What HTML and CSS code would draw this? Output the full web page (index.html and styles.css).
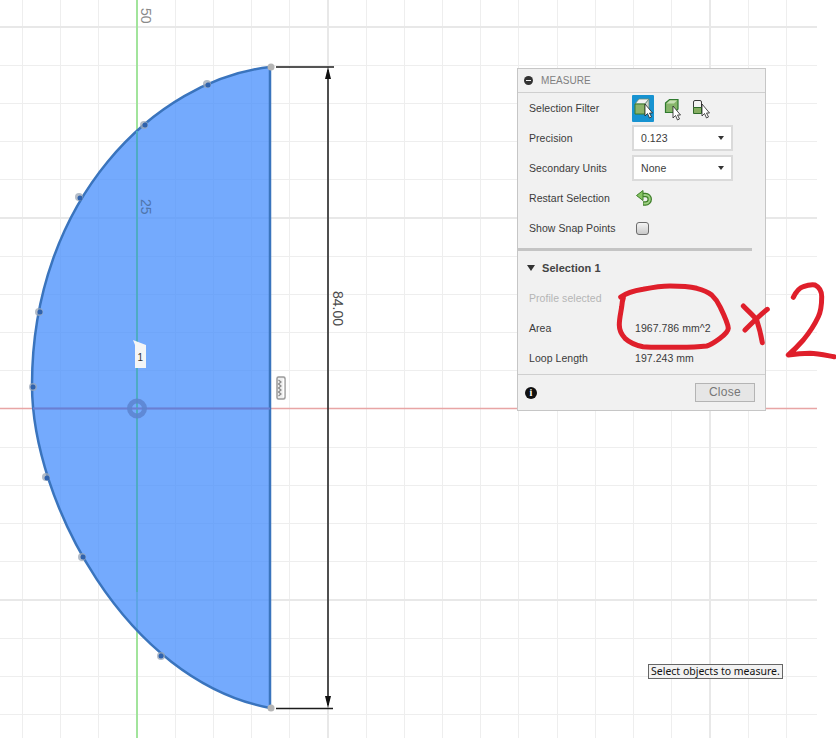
FILE: index.html
```html
<!DOCTYPE html>
<html lang="en">
<head>
<meta charset="utf-8">
<title>Measure</title>
<link rel="stylesheet" href="styles.css">
</head>
<body>
<main class="viewport">
  <svg class="canvas" width="836" height="738" viewBox="0 0 836 738">
    <path class="grid" d="M22.5 0V738M60.5 0V738M98.5 0V738M175.5 0V738M213.5 0V738M251.5 0V738M289.5 0V738M366.5 0V738M404.5 0V738M442.5 0V738M480.5 0V738M518.5 0V738M557.5 0V738M595.5 0V738M633.5 0V738M671.5 0V738M748.5 0V738M786.5 0V738M0 65.5H817M0 103.5H817M0 141.5H817M0 179.5H817M0 256.5H817M0 294.5H817M0 332.5H817M0 370.5H817M0 447.5H817M0 485.5H817M0 523.5H817M0 561.5H817M0 638.5H817M0 676.5H817M0 714.5H817"/>
    <path class="grid-major" d="M328 0V738M710 0V738M0 27H817M0 218H817M0 600H817"/>
    <path class="axis-x" d="M0 408.5H817"/>
    <path class="axis-y" d="M137 0V738"/>
    <path class="profile" d="M270 67C155 80 32 200 32 385C32 500 125 680 270 708Z"/>
    <path class="axis-y-in" d="M137 131V592"/>
    <path class="axis-x-in" d="M33 408.5H270"/>
    <circle class="origin" cx="137" cy="408.5" r="7.5"/>
    <g class="pts-halo">
      <circle cx="207" cy="84" r="4"/><circle cx="144" cy="125" r="4"/><circle cx="79" cy="197" r="4"/><circle cx="39" cy="312" r="4"/><circle cx="33" cy="387" r="4"/><circle cx="46" cy="477" r="4"/><circle cx="82" cy="557" r="4"/><circle cx="161" cy="656" r="4"/>
    </g>
    <g class="pts">
      <circle cx="208" cy="85" r="2.5"/><circle cx="145" cy="125" r="2.5"/><circle cx="80" cy="198" r="2.5"/><circle cx="40" cy="312" r="2.5"/><circle cx="33" cy="387" r="2.5"/><circle cx="47" cy="478" r="2.5"/><circle cx="83" cy="557" r="2.5"/><circle cx="161" cy="656" r="2.5"/>
    </g>
    <circle class="end" cx="271" cy="67" r="3.5"/>
    <circle class="end" cx="271" cy="708" r="3.5"/>
    <path class="tag" d="M133 340L146 345V368H135V345Z"/>
    <text class="tag-text" x="137.5" y="361">1</text>
    <g class="snap">
      <rect x="277" y="377" width="8" height="22" rx="1.5"/>
      <path class="snap-bar" d="M283.5 379V397"/>
      <path class="snap-teeth" d="M278.5 380L281 382L278.5 384L281 386L278.5 388L281 390L278.5 392L281 394L278.5 396"/>
    </g>
    <path class="dim" d="M276 67H334M276 708.5H333M328 70V705"/>
    <path class="arrow" d="M328 67L331 79H325ZM328 708L331 696H325Z"/>
    <text class="dim-text" transform="translate(333 291) rotate(90)">84.00</text>
    <text class="scale" transform="translate(141 8) rotate(90)">50</text>
    <text class="scale scale-in" transform="translate(141 199) rotate(90)">25</text>
  </svg>

  <section class="panel">
    <header class="panel-head">
      <span class="collapse"></span>
      <span class="panel-title">MEASURE</span>
    </header>
    <div class="row">
      <span class="label">Selection Filter</span>
      <div class="filters">
        <span class="filter filter-on">
          <svg width="22" height="27" viewBox="0 0 22 27">
            <path class="cube-top" d="M3 9L7 4H17L13 9Z"/>
            <path class="cube-side" d="M13 9L17 4V14L13 19Z"/>
            <path class="cube-face" d="M3 9H13V19H3Z"/>
            <path class="cursor" d="M13 9V21L15.5 18.5L17.5 23L19.5 22L17.5 18H20.5Z"/>
          </svg>
        </span>
        <span class="filter">
          <svg width="22" height="27" viewBox="0 0 22 27">
            <path class="cube-solid" d="M4.5 8L8.5 4.5H17V14L13.5 17.5H4.500Z"/>
            <path class="cube-light" d="M5.5 8.5L8.8 5.5H16L13 8.5Z"/>
            <path class="cursor" d="M12 11V23L14.5 20.5L16.5 25L18.5 24L16.5 20H19.5Z"/>
          </svg>
        </span>
        <span class="filter">
          <svg width="22" height="27" viewBox="0 0 22 27">
            <path class="body-top" d="M3.5 7Q3.5 5.500 5 5.500H10Q11.500 5.500 11.500 7V12.500H3.500Z"/>
            <path class="body-low" d="M3.5 12.5H11.5V18.5H3.5Z"/>
            <path class="cursor" d="M12 9V21L14.5 18.5L16.5 23L18.5 22L16.5 18H19.5Z"/>
          </svg>
        </span>
      </div>
    </div>
    <div class="row">
      <span class="label">Precision</span>
      <div class="select"><span>0.123</span><span class="caret"></span></div>
    </div>
    <div class="row">
      <span class="label">Secondary Units</span>
      <div class="select"><span>None</span><span class="caret"></span></div>
    </div>
    <div class="row">
      <span class="label">Restart Selection</span>
      <svg class="restart" width="18" height="18" viewBox="0 0 18 18">
        <path class="restart-outer" d="M7 6H10.5A4.2 4.2 0 0 1 10.5 14.5H8"/>
        <path class="restart-inner" d="M7 6H10.5A4.2 4.2 0 0 1 10.5 14.5H8.5"/>
        <path class="restart-head" d="M1.5 6.500L8 1.500V11.500Z"/>
      </svg>
    </div>
    <div class="row">
      <span class="label">Show Snap Points</span>
      <span class="check"></span>
    </div>
    <div class="divider"></div>
    <div class="section-head">
      <span class="tri"></span>
      <span class="section-title">Selection 1</span>
    </div>
    <div class="row"><span class="label label-muted">Profile selected</span></div>
    <div class="row"><span class="label">Area</span><span class="value">1967.786 mm^2</span></div>
    <div class="row"><span class="label">Loop Length</span><span class="value">197.243 mm</span></div>
    <footer class="panel-foot">
      <span class="info">i</span>
      <span class="close">Close</span>
    </footer>
  </section>

  <div class="tooltip">Select objects to measure.</div>

  <svg class="ink" width="836" height="738" viewBox="0 0 836 738">
    <path d="M620.7 297C628 292 636 290.5 643 289.3C652 287.5 661 286 670 286C680 286 689 286.5 696.7 288.3C703 290 708 292 711.7 295C716 299 718 302.5 720 306.7C724 315 728 323 728.3 328.3C728 332 724.5 335 720 338.3C715 342 711 345 706.7 346C695 347.5 682 347.5 670 347.3C660 347.3 651 347.5 643 346.7C635 345 629 342 625 338.3C621 334 619.3 330 619.3 325C619.3 318 621 312 621.7 306.7C622 303 622.5 300 623.3 298"/>
    <path d="M767.3 309.3C760 315 752 323 745 330"/>
    <path d="M743.3 306C748 311 753 315 756.7 320C759 327 761 335 762.3 342.7"/>
    <path d="M793.3 297.3C796 292 799 288 803.3 286.7C808 285 812 284.5 815 285C819 287 821.7 291 821.7 296.7C821.7 304 821 311 818.3 316.7C814 326 809 333 803.3 340C798 346 793 351 788.3 355C795 354 802 353.3 810 353.3C818 353.5 827 355.5 834 356.7"/>
  </svg>
</main>
</body>
</html>
```

FILE: styles.css
```css
html, body {
  margin: 0;
  padding: 0;
  background: #fff;
}

.viewport {
  position: relative;
  width: 836px;
  height: 738px;
  overflow: hidden;
  font-family: "Liberation Sans", Arial, sans-serif;
}

.canvas, .ink {
  position: absolute;
  left: 0;
  top: 0;
  display: block;
}

.ink { pointer-events: none; }
.ink path {
  fill: none;
  stroke: #df1f2b;
  stroke-width: 5;
  stroke-linecap: round;
  stroke-linejoin: round;
}

.grid { fill: none; stroke: #eeeeee; stroke-width: 1; }
.grid-major { fill: none; stroke: #e8e8e8; stroke-width: 2; }
.axis-x { fill: none; stroke: #e8a5a5; stroke-width: 1.5; }
.axis-y { fill: none; stroke: #a2e49c; stroke-width: 2; }
.axis-y-in { fill: none; stroke: #4eabc4; stroke-width: 2; }
.axis-x-in { fill: none; stroke: #6a7fd2; stroke-width: 2; }
.profile {
  fill: rgba(72, 143, 252, 0.76);
  stroke: #3a74bd;
  stroke-width: 2.5;
  stroke-linejoin: round;
}
.origin { fill: none; stroke: #5c84cf; stroke-width: 5; opacity: 0.85; }
.pts-halo circle { fill: #9aa5b5; opacity: 0.75; }
.pts circle { fill: #2f62ad; }
.end { fill: #b5b5b5; }
.tag { fill: #f4f5f6; }
.tag-text { font-size: 10px; fill: #333; }
.snap rect { fill: #efefef; stroke: #9a9a9a; stroke-width: 1.5; }
.snap-bar { fill: none; stroke: #fff; stroke-width: 1.5; }
.snap-teeth { fill: none; stroke: #8a8a8a; stroke-width: 1.2; }
.dim { fill: none; stroke: #1c1c1c; stroke-width: 1.5; }
.arrow { fill: #111; }
.dim-text { font-size: 14px; fill: #4a4a4a; }
.scale { font-size: 14px; fill: #8a8a8a; }
.scale-in { fill: #4f75ab; }

.panel {
  position: absolute;
  left: 517px;
  top: 68px;
  width: 249px;
  height: 343px;
  box-sizing: border-box;
  display: flex;
  flex-direction: column;
  background: #f1f1f1;
  border: 1px solid #c6c6c6;
  font-size: 10.5px;
  letter-spacing: 0.05px;
  color: #3b3b3b;
}

.panel-head {
  flex: none;
  height: 23px;
  display: flex;
  align-items: center;
  gap: 8px;
  padding-left: 6px;
  border-bottom: 1px solid #cfcfcf;
}

.collapse {
  position: relative;
  width: 9px;
  height: 9px;
  border-radius: 50%;
  background: #333;
}
.collapse::after {
  content: "";
  position: absolute;
  left: 2px;
  right: 2px;
  top: 4px;
  height: 1px;
  background: #f1f1f1;
}

.panel-title { color: #808080; font-size: 10px; }

.row {
  flex: none;
  height: 30px;
  display: flex;
  align-items: center;
  padding-left: 11px;
}

.label { flex: none; width: 103px; }
.label-muted { color: #b5b5b5; }
.value { margin-left: 3px; }

.filters { display: flex; }
.filter { display: block; width: 22px; height: 27px; margin-right: 7px; }
.filter-on { background: #1793d1; border-radius: 1px; }
.filter svg { display: block; }

.cube-top { fill: #f2f2f2; stroke: #6e8a6e; stroke-width: 0.8; }
.cube-side { fill: #cfd6cf; stroke: #6e8a6e; stroke-width: 0.8; }
.cube-face { fill: #8db36a; stroke: #3d7a2d; stroke-width: 1; }
.cube-solid { fill: #86b469; stroke: #2f7a2f; stroke-width: 1.2; }
.cube-light { fill: #c5dfb2; }
.body-top { fill: #f4f4f4; stroke: #3b3b3b; stroke-width: 1; }
.body-low { fill: #86ad62; stroke: #2f6b2a; stroke-width: 1; }
.cursor { fill: #fff; stroke: #222; stroke-width: 0.8; }

.select {
  box-sizing: border-box;
  width: 101px;
  height: 26px;
  display: flex;
  align-items: center;
  justify-content: space-between;
  padding: 0 7px;
  background: #fff;
  border: 2px solid #dadada;
}

.caret {
  width: 0;
  height: 0;
  border-left: 3px solid transparent;
  border-right: 3px solid transparent;
  border-top: 4px solid #333;
}

.restart { display: block; margin-left: 3px; }
.restart-outer { fill: none; stroke: #3f7f2a; stroke-width: 4.5; }
.restart-inner { fill: none; stroke: #9ed083; stroke-width: 2; }
.restart-head { fill: #86c463; stroke: #3f7f2a; stroke-width: 1; stroke-linejoin: round; }

.check {
  box-sizing: border-box;
  width: 13px;
  height: 13px;
  margin-left: 4px;
  border: 1px solid #6c6c6c;
  border-radius: 3px;
  background: linear-gradient(#f4f4f4, #c9c9c9);
}

.divider {
  flex: none;
  height: 3px;
  margin: 5px 13px 3px 0;
  background: #c4c4c4;
}

.section-head {
  flex: none;
  height: 30px;
  display: flex;
  align-items: center;
  gap: 7px;
  padding-left: 9px;
  margin-top: -1px;
}

.tri {
  width: 0;
  height: 0;
  border-left: 4px solid transparent;
  border-right: 4px solid transparent;
  border-top: 6px solid #333;
}

.section-title { font-size: 11px; font-weight: bold; color: #444; }

.panel-foot {
  flex: 1;
  display: flex;
  align-items: center;
  justify-content: space-between;
  padding: 0 10px 0 7px;
  margin-top: 1px;
  border-top: 1px solid #cfcfcf;
}

.info {
  width: 12px;
  height: 12px;
  border-radius: 50%;
  background: #111;
  color: #fff;
  font-family: "Liberation Serif", serif;
  font-weight: bold;
  font-size: 10px;
  line-height: 12px;
  text-align: center;
}

.close {
  box-sizing: border-box;
  width: 60px;
  height: 19px;
  line-height: 17px;
  text-align: center;
  font-size: 12px;
  letter-spacing: 0.3px;
  color: #777;
  background: #e6e6e6;
  border: 1px solid #b4b4b4;
}

.tooltip {
  position: absolute;
  left: 648px;
  top: 664px;
  width: 135px;
  height: 15px;
  box-sizing: border-box;
  border: 1px solid #666;
  background: #f2f2f2;
  color: #111;
  font-family: "Noto Sans", sans-serif;
  font-size: 10.5px;
  line-height: 13px;
  padding-left: 2px;
  white-space: nowrap;
}
```
